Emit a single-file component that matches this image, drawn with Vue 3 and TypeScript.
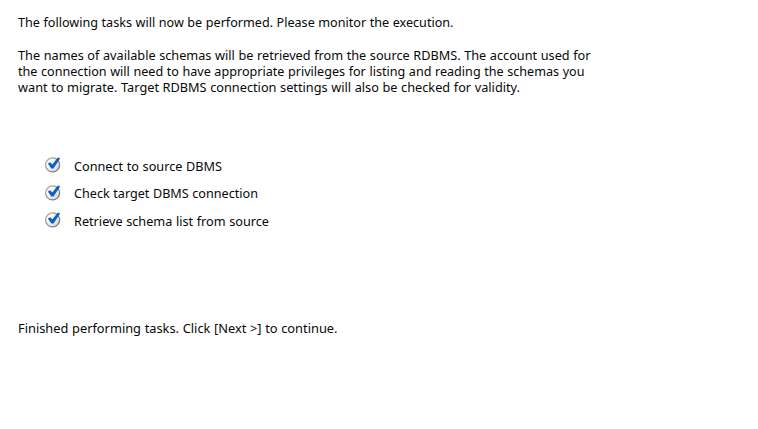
<script setup lang="ts">
interface Line { text: string; width: number }

const heading: Line = { text: 'The following tasks will now be performed. Please monitor the execution.', width: 435.5 }
const description: Line[] = [
  { text: 'The names of available schemas will be retrieved from the source RDBMS. The account used for', width: 572.5 },
  { text: 'the connection will need to have appropriate privileges for listing and reading the schemas you', width: 566.5 },
  { text: 'want to migrate. Target RDBMS connection settings will also be checked for validity.', width: 502 },
]
const tasks: Line[] = [
  { text: 'Connect to source DBMS', width: 148 },
  { text: 'Check target DBMS connection', width: 184 },
  { text: 'Retrieve schema list from source', width: 195 },
]
const footer: Line = { text: 'Finished performing tasks. Click [Next >] to continue.', width: 319.5 }
</script>

<template>
  <main class="page">
    <svg class="line" height="16"><text x="0" y="13" :textLength="heading.width" lengthAdjust="spacingAndGlyphs">{{ heading.text }}</text></svg>
    <section class="description">
      <svg v-for="l in description" :key="l.text" class="line" height="16"><text x="0" y="13" :textLength="l.width" lengthAdjust="spacingAndGlyphs">{{ l.text }}</text></svg>
    </section>
    <ul class="tasks">
      <li v-for="t in tasks" :key="t.text" class="task">
        <svg class="check" width="18" height="18" viewBox="0 0 18 18">
          <defs>
            <linearGradient id="rim" x1="0" y1="0" x2="1" y2="1">
              <stop offset="0" stop-color="#b5b5b5" />
              <stop offset="1" stop-color="#6c6c6c" />
            </linearGradient>
            <linearGradient id="face" x1="0" y1="0" x2="1" y2="1">
              <stop offset="0.3" stop-color="#ffffff" />
              <stop offset="1" stop-color="#cfcfcf" />
            </linearGradient>
          </defs>
          <circle cx="8.6" cy="8.9" r="7" fill="url(#face)" stroke="url(#rim)" stroke-width="1.3" />
          <path d="M3.8 7.4 L6.3 6.2 L8.3 8.6 L13.8 1.4 L16.2 2.6 L9.5 12.6 L7.3 12.6 Z" fill="#1060c4" />
        </svg>
        <svg class="line" height="16"><text x="0" y="13" :textLength="t.width" lengthAdjust="spacingAndGlyphs">{{ t.text }}</text></svg>
      </li>
    </ul>
    <svg class="line" height="16"><text x="0" y="13" :textLength="footer.width" lengthAdjust="spacingAndGlyphs">{{ footer.text }}</text></svg>
  </main>
</template>

<style scoped>
.page { box-sizing: border-box; width: 758px; height: 429px; padding: 14px 18px; background: #fff; }
.line { display: block; width: 600px; overflow: visible; font: 13px "Noto Sans", "DejaVu Sans", sans-serif; word-spacing: 0.3px; fill: #080808; }
.description { margin-top: 17px; }
.tasks { list-style: none; margin: 56.5px 0 86px; padding: 0 0 0 26px; }
.task { display: flex; align-items: center; gap: 12px; height: 27.5px; }
.task .line { position: relative; top: 0.5px; }
.check { flex: none; }
</style>
